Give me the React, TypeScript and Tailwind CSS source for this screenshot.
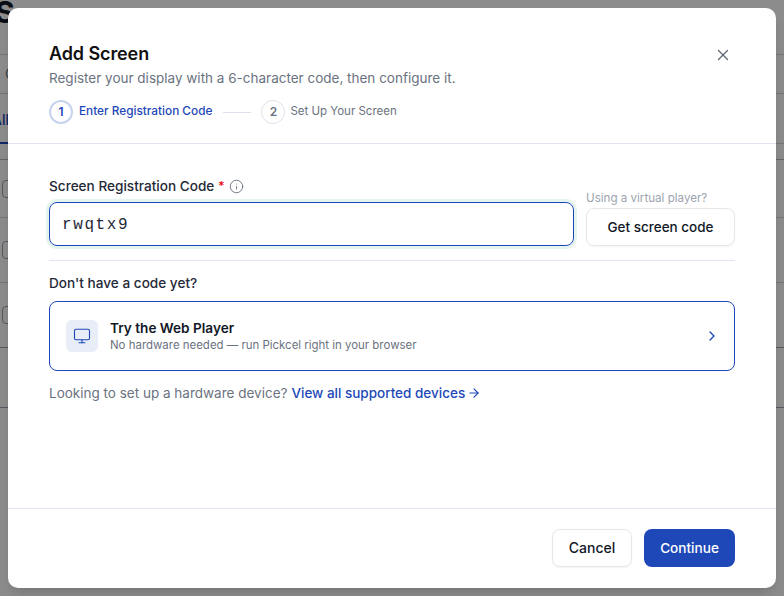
import React from 'react';
import { X, Info, Monitor, ChevronRight, ArrowRight } from 'lucide-react';

const font = "font-['Inter',sans-serif]";

// Dimmed page behind the dialog, only the edges stay visible
const BackgroundPage: React.FC = () => (
  <div className="w-full h-full flex flex-col bg-white text-[#111827] overflow-hidden">
    <div className="h-[55px] border-b border-[#d1d5db] text-[30px] font-bold leading-[25px] -ml-[5px]">S</div>
    <div className="h-[39px] border-b border-[#d1d5db] pt-[9px] pl-[5px] text-sm text-gray-500">C</div>
    <div className="h-[50px] border-b border-[#d1d5db] flex flex-col justify-end">
      <div className="pb-[12px] text-sm text-[#1e48b8] font-medium -ml-[8px]">All</div>
      <div className="w-[8px] h-[2px] bg-[#1e48b8] -mb-px" />
    </div>
    <div className="h-[74px] border-b border-[#d1d5db] pt-[36px] pl-[2px] relative">
      <div className="absolute left-0 right-0 top-[15px] h-px bg-[#b6bac4]" />
      <div className="w-[18px] h-[18px] rounded border border-[#9ca3af]" />
    </div>
    <div className="h-[65px] border-b border-[#d1d5db] pt-[23px] pl-[2px]">
      <div className="w-[18px] h-[18px] rounded border border-[#9ca3af]" />
    </div>
    <div className="h-[65px] border-b border-[#9ca3af] pt-[23px] pl-[2px]">
      <div className="w-[18px] h-[18px] rounded border border-[#9ca3af]" />
    </div>
    <div className="h-[60px] border-b border-[#9ca3af]" />
  </div>
);

const App: React.FC = () => {
  return (
    <div className={`relative w-[784px] h-[596px] overflow-hidden ${font}`}>
      <BackgroundPage />
      <div className="absolute inset-0 bg-black/45" />

      <div className="absolute left-2 top-2 w-[768px] h-[580px] bg-white rounded-[10px] flex flex-col shadow-lg">
        <div className="relative h-[136px] border-b border-[#e3e5f0] px-[41px] pt-[35px] shrink-0">
          <h2 className="text-[18px] leading-[22px] font-semibold text-[#111111] tracking-[-0.1px]">Add Screen</h2>
          <p className="mt-[3px] text-[13.5px] leading-[20px] text-[#6b7280]">
            Register your display with a 6-character code, then configure it.
          </p>
          <div className="mt-[12px] flex items-center">
            <div className="w-6 h-6 rounded-full border-2 border-[#c7d2ee] flex items-center justify-center text-xs font-semibold text-[#1e48b8]">
              1
            </div>
            <span className="ml-[6px] text-[11.8px] font-medium text-[#1e48b8]">Enter Registration Code</span>
            <div className="ml-[11px] w-[28px] h-px bg-[#dfe1ea]" />
            <div className="ml-[10px] w-6 h-6 rounded-full border border-[#dfe1ea] flex items-center justify-center text-xs font-semibold text-[#6b7280]">
              2
            </div>
            <span className="ml-[5px] text-[11.5px] text-[#6b7280]">Set Up Your Screen</span>
          </div>
          <button className="absolute right-[44px] top-[38px] text-[#5f6672]">
            <X size={18} strokeWidth={1.75} />
          </button>
        </div>

        <div className="flex-1 px-[41px] pt-[34px]">
          <div className="flex items-end gap-3 pb-[14px] border-b border-[#e3e5f0]">
            <div className="flex-1">
              <div className="flex items-center text-[13.6px] leading-[16px] font-medium text-[#1f2937]">
                Screen Registration Code
                <span className="ml-[4px] text-red-600 text-xs">*</span>
                <Info size={15} strokeWidth={1.5} className="ml-[4px] text-[#6b7280]" />
              </div>
              <div className="mt-[8px] h-[44px] rounded-lg border border-[#1e48b8] ring-[3px] ring-[#e6f4ee] flex items-center pl-3 pt-px font-['Liberation_Mono',monospace] text-base tracking-[1.6px] text-[#1f2937]">
                rwqtx9
              </div>
            </div>
            <div className="w-[149px] shrink-0">
              <div className="text-[11.6px] leading-[16px] text-[#9ca3af]">Using a virtual player?</div>
              <button className="mt-[2px] w-full h-[38px] rounded-lg border border-[#e5e7eb] shadow-xs text-[13.5px] font-medium text-[#111827]">
                Get screen code
              </button>
            </div>
          </div>

          <div className="mt-[14px] text-[13.6px] leading-[16px] font-medium text-[#1f2937]">Don't have a code yet?</div>

          <div className="mt-[10px] h-[70px] rounded-lg border border-[#1e48b8] flex items-center pl-4 pr-[14px]">
            <div className="w-8 h-8 rounded-md bg-[#e8edf8] flex items-center justify-center">
              <Monitor size={18} strokeWidth={1.5} className="text-[#1e48b8]" />
            </div>
            <div className="ml-3 flex-1">
              <div className="text-[13.6px] leading-[16px] font-semibold text-[#111827]">Try the Web Player</div>
              <div className="mt-[1px] text-[11.45px] leading-[16px] text-[#6b7280]">
                No hardware needed — run Pickcel right in your browser
              </div>
            </div>
            <ChevronRight size={16} strokeWidth={2} className="text-[#1e48b8]" />
          </div>

          <div className="mt-[13px] flex items-center text-[13.5px] leading-[18px] text-[#6b7280]">
            Looking to set up a hardware device?
            <a className="ml-1 flex items-center text-[#1e48b8] font-medium">
              View all supported devices
              <ArrowRight size={14} strokeWidth={2} className="ml-[2px]" />
            </a>
          </div>
        </div>

        <div className="h-[80px] border-t border-[#e3e5f0] px-[41px] pb-[2px] flex items-center justify-end gap-3 shrink-0">
          <button className="w-[80px] h-[38px] rounded-lg border border-[#e5e7eb] shadow-xs pt-px text-sm font-medium text-[#111827]">
            Cancel
          </button>
          <button className="w-[91px] h-[38px] rounded-lg bg-[#1e48b8] pt-px text-[13.6px] font-medium text-white">
            Continue
          </button>
        </div>
      </div>
    </div>
  );
};

export default App;
